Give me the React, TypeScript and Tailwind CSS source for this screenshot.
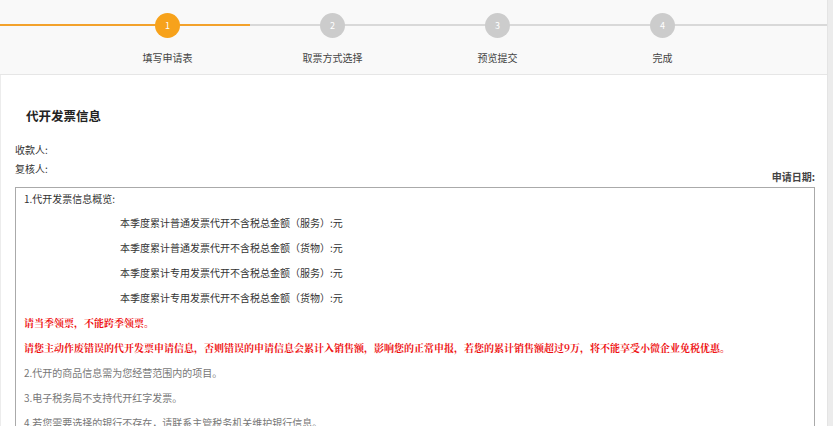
import React from "react";

const steps = [
  { n: 1, label: "填写申请表", active: true },
  { n: 2, label: "取票方式选择", active: false },
  { n: 3, label: "预览提交", active: false },
  { n: 4, label: "完成", active: false },
];

const summary = [
  "本季度累计普通发票代开不含税总金额（服务）:元",
  "本季度累计普通发票代开不含税总金额（货物）:元",
  "本季度累计专用发票代开不含税总金额（服务）:元",
  "本季度累计专用发票代开不含税总金额（货物）:元",
];

export default function App() {
  return (
    <div className="flex w-[833px] h-[426px] overflow-hidden bg-white font-['Microsoft_YaHei','Noto_Sans_CJK_SC',sans-serif] text-[10px] text-[#333]">
      <div className="w-[828px] flex flex-col border-r border-[#e4e4e4]">
        {/* 步骤条 */}
        <div className="relative h-[75px] shrink-0 bg-[#f9f9f9] border-b border-[#e6e6e6]">
          <div className="absolute left-0 top-[24px] h-[2px] w-[250px] bg-[#f3a22c]" />
          <div className="absolute left-[250px] right-0 top-[24px] h-[2px] bg-[#d9d9d9]" />
          <div className="relative grid grid-cols-[165px_165px_165px_165px] pl-[85px] pt-[13px]">
            {steps.map((s) => (
              <div key={s.n} className="flex flex-col items-center">
                <div
                  className={`flex h-[25px] w-[25px] items-center justify-center rounded-full text-[9px] text-white ${
                    s.active ? "bg-[#f7a21b]" : "bg-[#cccccc]"
                  }`}
                >
                  {s.n}
                </div>
                <div className="mt-[13px] text-[10px] leading-[14px] text-[#444]">{s.label}</div>
              </div>
            ))}
          </div>
        </div>

        {/* 内容 */}
        <div className="flex-1 border-l border-[#ececec] pl-[14px] pr-[12px]">
          <h2 className="pt-[32px] pl-[11px] text-[12.5px] font-bold leading-[18px] text-[#222]">
            代开发票信息
          </h2>
          <div className="mt-[16px] leading-[18px]">收款人:</div>
          <div className="mt-[1px] leading-[18px]">复核人:</div>
          <div className="-mt-[8px] text-right font-bold leading-[14px] text-[#444]">申请日期:</div>
          <div className="mt-[3px] w-[800px] border border-[#aaaaaa] pl-[8px]">
            <div className="leading-[22px]">1.代开发票信息概览:</div>
            {summary.map((t) => (
              <div key={t} className="pl-[96px] leading-[25px]">
                {t}
              </div>
            ))}
            <div className="font-['SimSun','Noto_Serif_CJK_SC','Noto_Sans_CJK_SC',serif] font-bold leading-[25px] text-[#ee1111]">
              请当季领票，不能跨季领票。
            </div>
            <div className="font-['SimSun','Noto_Serif_CJK_SC','Noto_Sans_CJK_SC',serif] font-bold leading-[25px] text-[#ee1111] whitespace-nowrap">
              请您主动作废错误的代开发票申请信息，否则错误的申请信息会累计入销售额，影响您的正常申报，若您的累计销售额超过9万，将不能享受小微企业免税优惠。
            </div>
            <div className="leading-[25px] text-[#777]">2.代开的商品信息需为您经营范围内的项目。</div>
            <div className="leading-[25px] text-[#777]">3.电子税务局不支持代开红字发票。</div>
            <div className="leading-[25px] text-[#777]">4.若您需要选择的银行不存在，请联系主管税务机关维护银行信息。</div>
          </div>
        </div>
      </div>
      <div className="w-[5px] bg-[#ececec]" />
    </div>
  );
}
